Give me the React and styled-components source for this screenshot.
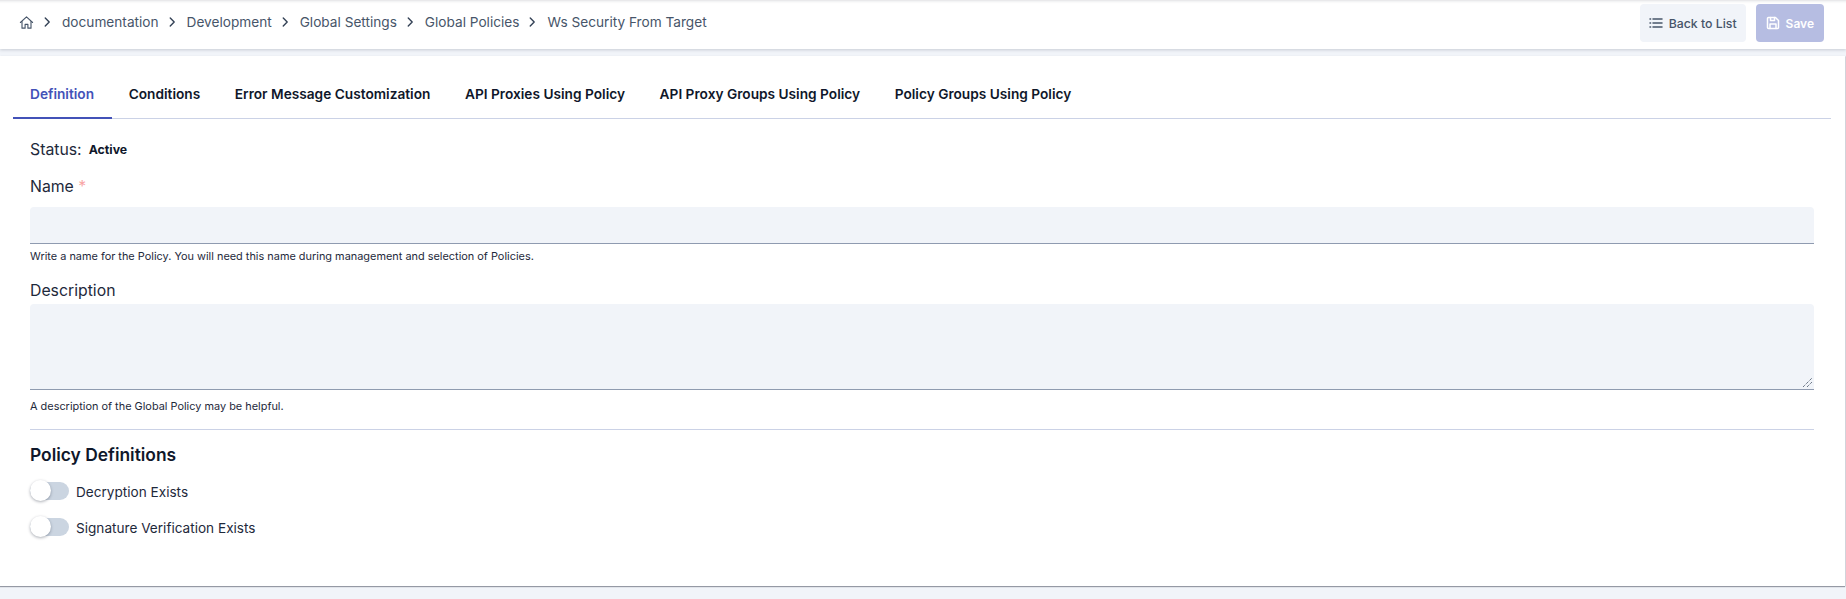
import React from "react";
import styled, { createGlobalStyle } from "styled-components";

const Global = createGlobalStyle`
  html, body { margin: 0; padding: 0; background: #f1f4f9; }
  body { font-family: Inter, "Liberation Sans", sans-serif; color: #0f172a; overflow: hidden; }
  * { box-sizing: border-box; }
`;

const Page = styled.div`
  width: 1846px;
  height: 599px;
  display: flex;
  flex-direction: column;
  overflow: hidden;
`;

const Header = styled.header`
  height: 49px;
  flex: none;
  background: #fff;
  display: flex;
  align-items: center;
  justify-content: space-between;
  padding: 0 22px 5px 19px;
  box-shadow: inset 0 4px 3px -3px rgba(15, 23, 42, 0.14), 0 1px 3px rgba(15, 23, 42, 0.18);
  position: relative;
`;

const Crumbs = styled.nav`
  display: flex;
  align-items: center;
`;

const Crumb = styled.span`
  font-size: 13.65px;
  line-height: 20px;
  color: #475569;
`;

const Sep = styled.svg`
  width: 14px;
  height: 14px;
  margin: 0 8px 0 6px;
  fill: none;
  stroke: #334155;
  stroke-width: 1.6;
  stroke-linecap: round;
  stroke-linejoin: round;
`;

const HomeIcon = styled.svg`
  width: 15px;
  height: 15px;
  fill: none;
  stroke: #475569;
  stroke-width: 1.2;
  stroke-linecap: round;
  stroke-linejoin: round;
`;

const Actions = styled.div`
  display: flex;
  gap: 10px;
  margin-top: 2px;
`;

const Button = styled.div`
  height: 38px;
  display: flex;
  align-items: center;
  gap: 6px;
  border-radius: 4px;
  font-size: ${(p) => (p.$primary ? "12px" : "12.3px")};
  padding: 0 ${(p) => (p.$primary ? "10px" : "9px")};
  background: ${(p) => (p.$primary ? "#b6bde2" : "#f1f4f9")};
  color: ${(p) => (p.$primary ? "#fff" : "#475569")};
  font-weight: ${(p) => (p.$primary ? 600 : 500)};
  svg { width: 14px; height: 14px; fill: none; stroke: currentColor; stroke-width: 1.5; stroke-linecap: round; stroke-linejoin: round; }
`;

const Card = styled.main`
  margin-top: 7px;
  height: 530px;
  flex: none;
  background: #fff;
  padding: 0 14px 0 13px;
  margin-right: 1px;
  box-shadow: 0 1px 1px rgba(15, 23, 42, 0.4), 1px 0 1px rgba(15, 23, 42, 0.08);
`;

const Tabs = styled.div`
  height: 63px;
  display: flex;
  align-items: flex-end;
  border-bottom: 1px solid #cbd2e6;
`;

const Tab = styled.div`
  height: 63px;
  padding: 0 17.6px 13px 17px;
  margin-bottom: -1px;
  display: flex;
  align-items: flex-end;
  font-size: 13.7px;
  line-height: 20px;
  font-weight: 600;
  color: ${(p) => (p.$active ? "#4352b8" : "#0f172a")};
  border-bottom: 2px solid ${(p) => (p.$active ? "#4352b8" : "transparent")};
`;

const Body = styled.div`
  padding: 20px 17px 0 17px;
`;

const StatusRow = styled.div`
  display: flex;
  align-items: center;
  gap: 7px;
  height: 20px;
  font-size: 15.8px;
  color: #1e293b;
`;

const StatusValue = styled.b`
  font-size: 12.3px;
  font-weight: 700;
  color: #0f172a;
`;

const Label = styled.div`
  margin-top: ${(p) => p.$top}px;
  font-size: 15.8px;
  line-height: 20px;
  color: #1e293b;
`;

const Star = styled.span`
  color: #f8a5a5;
`;

const Input = styled.div`
  margin-top: ${(p) => p.$top}px;
  height: ${(p) => p.$h}px;
  background: #f1f4f9;
  border-radius: 4px 4px 0 0;
  border-bottom: 1px solid #8f9bb0;
  position: relative;
`;

const Grip = styled.svg`
  position: absolute;
  right: 2px;
  bottom: 2px;
  width: 9px;
  height: 9px;
  stroke: #334155;
  stroke-width: 1;
  stroke-dasharray: 1 1;
`;

const Help = styled.div`
  margin-top: ${(p) => p.$top}px;
  font-size: 10.92px;
  line-height: 14px;
  color: #1e293b;
`;

const Divider = styled.hr`
  margin: 16px 0 0;
  border: 0;
  height: 1px;
  background: #cbd2e6;
`;

const Heading = styled.h3`
  margin: 14px 0 0;
  font-size: 17.4px;
  line-height: 22px;
  font-weight: 600;
  color: #0f172a;
`;

const ToggleList = styled.div`
  margin-top: 15.5px;
  display: flex;
  flex-direction: column;
  gap: 16px;
`;

const ToggleRow = styled.div`
  display: flex;
  align-items: center;
  gap: 7px;
  height: 20px;
  font-size: 13.6px;
  color: #1e293b;
`;

const Track = styled.div`
  width: 39px;
  height: 18px;
  border-radius: 9px;
  background: #cbd5e1;
  position: relative;
  margin-top: -2px;
`;

const Knob = styled.div`
  position: absolute;
  left: 0;
  top: -2px;
  width: 21px;
  height: 21px;
  border-radius: 50%;
  background: #fff;
  box-shadow: 0 1px 3px rgba(15, 23, 42, 0.35);
`;

const crumbs = ["documentation", "Development", "Global Settings", "Global Policies", "Ws Security From Target"];
const tabs = ["Definition", "Conditions", "Error Message Customization", "API Proxies Using Policy", "API Proxy Groups Using Policy", "Policy Groups Using Policy"];

const Chevron = () => (
  <Sep viewBox="0 0 16 16"><path d="M6 3.5 10.5 8 6 12.5" /></Sep>
);

export default function App() {
  return (
    <Page>
      <Global />
      <Header>
        <Crumbs>
          <HomeIcon viewBox="0 0 16 16">
            <path d="M1.5 8 8 2l6.5 6" />
            <path d="M3.2 7v7h3.3v-4h3v4h3.3V7" />
          </HomeIcon>
          <Chevron />
          {crumbs.map((c, i) => (
            <React.Fragment key={c}>
              <Crumb>{c}</Crumb>
              {i < crumbs.length - 1 && <Chevron />}
            </React.Fragment>
          ))}
        </Crumbs>
        <Actions>
          <Button>
            <svg viewBox="0 0 14 14"><path d="M4 3h9M4 7h9M4 11h9M1 3h.6M1 7h.6M1 11h.6" /></svg>
            Back to List
          </Button>
          <Button $primary>
            <svg viewBox="0 0 14 14"><path d="M2.5 1.5h7l3 3v7a1 1 0 0 1-1 1h-9a1 1 0 0 1-1-1v-9a1 1 0 0 1 1-1Z" /><path d="M4.5 1.5v3h4v-3M4 12.5v-4.5h6v4.5" /></svg>
            Save
          </Button>
        </Actions>
      </Header>
      <Card>
        <Tabs>
          {tabs.map((t, i) => (
            <Tab key={t} $active={i === 0}>{t}</Tab>
          ))}
        </Tabs>
        <Body>
          <StatusRow>Status: <StatusValue>Active</StatusValue></StatusRow>
          <Label $top={18}>Name <Star>*</Star></Label>
          <Input $top={10} $h={37} />
          <Help $top={5}>Write a name for the Policy. You will need this name during management and selection of Policies.</Help>
          <Label $top={18}>Description</Label>
          <Input $top={3} $h={86}>
            <Grip viewBox="0 0 9 9"><path d="M0 9 9 0M4 9l5-5" /></Grip>
          </Input>
          <Help $top={9}>A description of the Global Policy may be helpful.</Help>
          <Divider />
          <Heading>Policy Definitions</Heading>
          <ToggleList>
            <ToggleRow><Track><Knob /></Track>Decryption Exists</ToggleRow>
            <ToggleRow><Track><Knob /></Track>Signature Verification Exists</ToggleRow>
          </ToggleList>
        </Body>
      </Card>
    </Page>
  );
}
